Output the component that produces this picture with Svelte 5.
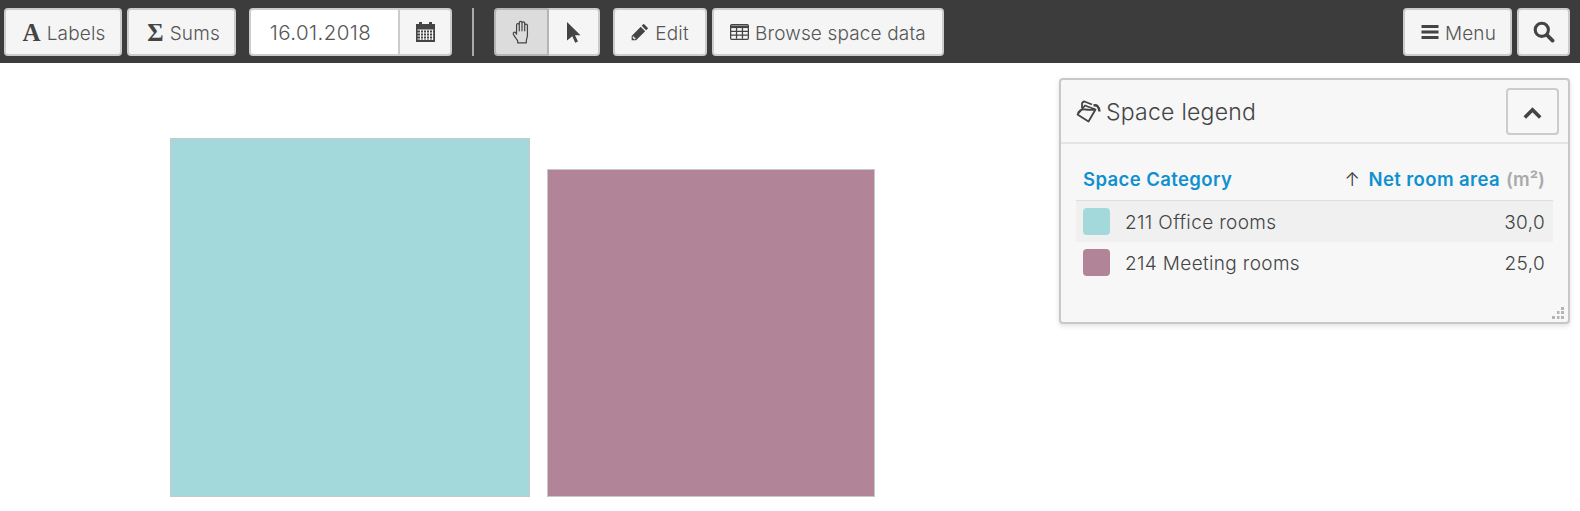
<script>
  const rows = [
    { name: "211 Office rooms", value: "30,0", color: "#a3d9da", hover: true },
    { name: "214 Meeting rooms", value: "25,0", color: "#b18497", hover: false },
  ];
</script>

<div class="page">
  <div class="toolbar">
    <button class="btn labels"><span class="glyph">A</span> Labels</button>
    <button class="btn sums"><span class="glyph">Σ</span> Sums</button>

    <div class="group date">
      <div class="date-input">16.01.2018</div>
      <button class="btn cal" aria-label="calendar">
        <svg width="19" height="20" viewBox="0 0 19 20">
          <path fill="#444" d="M3 0h3v2h7V0h3v2h3v18H0V2h3z" />
          <g fill="#f5f5f5">
            <path d="M1.500 7.500h16v1h-16zM1.500 10.500h16v1h-16zM1.500 13.500h16v1h-16zM1.500 16.500h16v1h-16z" />
            <path d="M4 8h1v10H4zM7 8h1v10H7zM10 8h1v10h-1zM13 8h1v10h-1zM16 8h1v10h-1z" />
          </g>
        </svg>
      </button>
    </div>

    <div class="divider"></div>

    <div class="group tools">
      <button class="btn hand" aria-label="pan">
        <svg width="22" height="25" viewBox="0 0 20 23" fill="none" stroke="#444" stroke-width="1.100" stroke-linejoin="round" stroke-linecap="round">
          <path d="M5 13V4.500a1.200 1.200 0 0 1 2.500 0V10M7.500 10V2.500a1.200 1.200 0 0 1 2.500 0V10M10 10V3a1.200 1.200 0 0 1 2.500 0V10M12.500 10V5a1.200 1.200 0 0 1 2.500 0v9c0 2-.5 3-1 4.500v2.500H6v-2c-1-1.500-2.500-3-4-6-.5-1.500 1.500-2.500 2.500-1L5 13" />
        </svg>
      </button>
      <button class="btn pointer" aria-label="select">
        <svg width="14" height="21" viewBox="0 0 14 21">
          <path fill="#444" d="M0 0l13.500 13.200H8l3 6.300-2.800 1.300-2.900-6.500L0 18.500z" />
        </svg>
      </button>
    </div>

    <button class="btn edit">
      <svg width="18" height="18" viewBox="0 0 17 17">
        <path fill="#444" d="M12 0.800l4.200 4.200-1.900 1.900-4.200-4.200zM9.200 3.600l4.200 4.200-8.600 8.600H.6v-4.200z" />
        <path fill="#f5f5f5" d="M1.800 12.800l1.200 0 0 1.200 1.200 0 0 1.200-1 .4-1.800-1.800z" />
      </svg>
      <span class="txt">Edit</span>
    </button>
    <button class="btn browse">
      <svg width="19" height="16" viewBox="0 0 18 15" fill="none" stroke="#444" stroke-width="1.200">
        <rect x=".6" y=".6" width="16.800" height="13.800" rx="1" />
        <path stroke-width="2.400" d="M.6 2.600h16.800" />
        <path d="M.6 7h16.800M.6 10.500h16.800M6.200 3v11M11.800 3v11" />
      </svg>
      <span class="txt">Browse space data</span>
    </button>

    <div class="spacer"></div>

    <button class="btn menu">
      <svg width="18" height="14" viewBox="0 0 17 14">
        <path fill="#444" d="M0 0h17v3H0zM0 5.500h17v3H0zM0 11h17v3H0z" />
      </svg>
      <span class="txt">Menu</span>
    </button>
    <button class="btn search" aria-label="search">
      <svg width="22" height="22" viewBox="0 0 20 20" fill="none" stroke="#444">
        <circle cx="8" cy="8" r="6" stroke-width="2.800" />
        <path stroke-width="3.400" stroke-linecap="round" d="M12.800 12.800l5 5" />
      </svg>
    </button>
  </div>

  <div class="plan">
    <div class="room office"></div>
    <div class="room meeting"></div>
  </div>

  <div class="legend">
    <div class="legend-head">
      <svg class="bucket" width="25" height="23" viewBox="0 0 25 23" fill="none" stroke="#444" stroke-width="1.800" stroke-linejoin="round">
        <path d="M9 5.500L19.500 9.500 12.500 21.500 1.500 14.500z" />
        <path d="M1.800 13.500C3 10.500 6 9 9.500 9.500 13 10 16 10 19 9.500" />
        <path d="M6 8V4a2.500 2.500 0 0 1 2.500-2.500L16 4.500" />
        <path d="M17.500 5.500c3.500-.8 5.500 1 6 6" stroke-width="2.400" />
      </svg>
      <span class="legend-title">Space legend</span>
      <button class="collapse" aria-label="collapse">
        <svg width="19" height="12" viewBox="0 0 19 12" fill="none" stroke="#444" stroke-width="3.600">
          <path d="M1.800 10.500l7.700-7.700 7.700 7.700" />
        </svg>
      </button>
    </div>
    <div class="legend-body">
      <div class="table-head">
        <span class="th">Space Category</span>
        <span class="sort">↑</span>
        <span class="th">Net room area</span>
        <span class="unit">(m²)</span>
      </div>
      {#each rows as row}
        <div class="row" class:hover={row.hover}>
          <span class="swatch" style={"background:" + row.color}></span>
          <span class="name">{row.name}</span>
          <span class="value">{row.value}</span>
        </div>
      {/each}
    </div>
    <svg class="grip" width="12" height="12" viewBox="0 0 12 12" fill="#b5b5b5">
      <path d="M9 0h3v3H9zM5 4h2.500v3H5zM9 4h3v3H9zM0 9h3v3H0zM5 9h2.500v3H5zM9 9h3v3H9z" />
    </svg>
  </div>
</div>

<style>
  :global(body) {
    background: #fff;
    font-family: "Inter", "Lato", sans-serif;
  }

  .page {
    position: relative;
    width: 1580px;
    height: 511px;
    overflow: hidden;
  }

  .toolbar {
    display: flex;
    align-items: center;
    height: 63px;
    padding: 8px 10px 7px 4px;
    box-sizing: border-box;
    background: #3c3c3c;
  }

  .btn {
    display: flex;
    align-items: center;
    justify-content: center;
    gap: 6px;
    height: 48px;
    padding: 2px 0 0;
    box-sizing: border-box;
    border: 2px solid #ccc;
    border-radius: 4px;
    background: #f5f5f5;
    color: #555;
    font-family: inherit;
    font-size: 19px;
    font-weight: 300;
    letter-spacing: 0.15px;
  }

  .btn svg { margin-top: -2px; }
  .txt { display: block; }

  .glyph {
    color: #444;
    font-family: "Liberation Serif", serif;
    font-weight: 700;
    font-size: 25px;
  }

  .labels { width: 118px; margin-right: 5px; padding-left: 2px; }
  .sums { width: 109px; margin-right: 13px; padding-left: 4px; }

  .group { display: flex; }

  .date { width: 203px; margin-right: 20px; }

  .date-input {
    display: flex;
    align-items: center;
    justify-content: center;
    width: 150px;
    height: 48px;
    box-sizing: border-box;
    padding-right: 8px;
    border: 2px solid #ccc;
    border-right-width: 1px;
    border-radius: 4px 0 0 4px;
    background: #fff;
    color: #555;
    font-size: 20.500px;
    font-weight: 300;
    letter-spacing: 0.4px;
  }

  .cal {
    width: 53px;
    border-left-width: 1px;
    border-radius: 0 4px 4px 0;
  }

  .divider {
    width: 2px;
    height: 48px;
    margin-right: 20px;
    background: #aaa;
  }

  .tools { margin-right: 13px; }

  .hand {
    width: 54px;
    border-right-width: 1px;
    border-radius: 4px 0 0 4px;
    background: #dcdcdc;
    border-color: #b5b5b5;
  }

  .pointer {
    width: 52px;
    border-left-width: 1px;
    border-radius: 0 4px 4px 0;
    border-left-color: #b5b5b5;
  }

  .edit { width: 94px; margin-right: 5px; }
  .browse { width: 232px; }
  .spacer { flex: 1; }
  .menu { width: 109px; margin-right: 5px; padding-left: 2px; }
  .search { width: 53px; }

  .room {
    position: absolute;
    box-sizing: border-box;
    border: 1px solid #c8c8c8;
  }

  .office {
    left: 170px;
    top: 138px;
    width: 360px;
    height: 359px;
    background: #a3d9da;
  }

  .meeting {
    left: 547px;
    top: 169px;
    width: 328px;
    height: 328px;
    background: #b18497;
  }

  .legend {
    position: absolute;
    left: 1059px;
    top: 78px;
    width: 511px;
    height: 246px;
    box-sizing: border-box;
    border: 2px solid #c8c8c8;
    border-radius: 4px;
    background: #f7f7f7;
    box-shadow: 0 2px 5px rgba(0, 0, 0, 0.12);
    color: #444;
  }

  .legend-head {
    display: flex;
    align-items: center;
    height: 64px;
    box-sizing: border-box;
    padding: 0 9px 0 15px;
    border-bottom: 2px solid #e4e4e4;
  }

  .bucket { margin-right: 5px; }

  .legend-title {
    flex: 1;
    padding-top: 1px;
    font-size: 23px;
    font-weight: 300;
    letter-spacing: 0.25px;
  }

  .collapse {
    display: flex;
    align-items: center;
    justify-content: center;
    width: 53px;
    height: 47px;
    padding: 4px 0 0;
    border: 2px solid #ccc;
    border-radius: 4px;
    background: #f7f7f7;
  }

  .legend-body { padding: 0 15px; }

  .table-head {
    display: flex;
    align-items: center;
    gap: 6px;
    height: 57px;
    box-sizing: border-box;
    padding: 14px 8px 0 7px;
    border-bottom: 1px solid #ddd;
    font-size: 18.500px;
    font-weight: 600;
    letter-spacing: 0.4px;
  }

  .th { color: #0f90cf; }
  .sort { margin-left: auto; margin-right: 2px; color: #333; font-weight: 300; }
  .unit { color: #aaa; letter-spacing: 0; }

  .row {
    display: flex;
    align-items: center;
    height: 41px;
    padding: 0 8px 0 7px;
    font-size: 19px;
    font-weight: 300;
    letter-spacing: 0.35px;
  }

  .row span { padding-top: 1px; }
  .row .swatch { padding-top: 0; }

  .row.hover { background: #f0f0f0; }

  .swatch {
    width: 27px;
    height: 27px;
    margin-right: 15px;
    border-radius: 4px;
  }

  .name { flex: 1; }

  .grip {
    position: absolute;
    right: 4px;
    bottom: 3px;
  }
</style>
